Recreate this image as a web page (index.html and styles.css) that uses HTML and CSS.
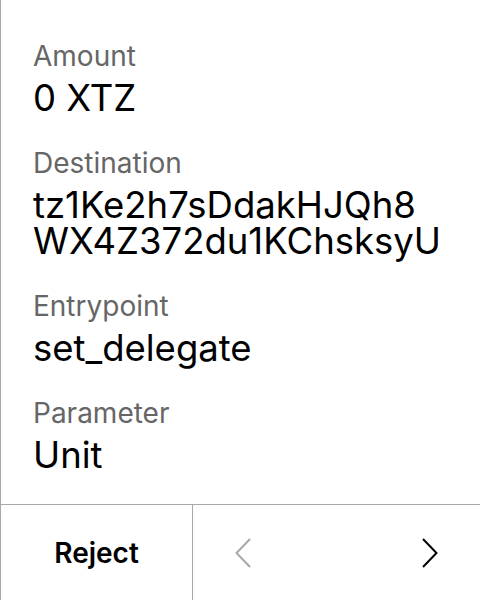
FILE: index.html
```html
<!DOCTYPE html>
<html>
<head>
<meta charset="utf-8">
<link rel="stylesheet" href="styles.css">
</head>
<body>
<div class="screen">
  <div class="content">
    <div class="field">
      <div class="label">Amount</div>
      <div class="value">0 XTZ</div>
    </div>
    <div class="field">
      <div class="label">Destination</div>
      <div class="value"><div>tz1Ke2h7sDdakHJQh8</div><div>WX4Z372du1KChsksyU</div></div>
    </div>
    <div class="field">
      <div class="label">Entrypoint</div>
      <div class="value">set_delegate</div>
    </div>
    <div class="field">
      <div class="label">Parameter</div>
      <div class="value">Unit</div>
    </div>
  </div>
  <div class="footer">
    <div class="reject">Reject</div>
    <div class="nav">
      <svg class="chev prev" width="16" height="30" viewBox="0 0 16 30"><path d="M15 1 L1.5 15 L15 29" fill="none" stroke="currentColor" stroke-width="2"/></svg>
      <svg class="chev next" width="16" height="30" viewBox="0 0 16 30"><path d="M1 1 L14.5 15 L1 29" fill="none" stroke="currentColor" stroke-width="2"/></svg>
    </div>
  </div>
</div>
</body>
</html>
```
FILE: styles.css
```css
html, body {
  margin: 0;
  padding: 0;
  background: #fff;
}
body {
  font-family: Inter, "Noto Sans", sans-serif;
  color: #000;
}
.screen {
  width: 479px;
  height: 600px;
  border-left: 1px solid #a8a8a8;
  display: flex;
  flex-direction: column;
}
.content {
  flex: 1;
  padding: 39px 0 0 32px;
  display: flex;
  flex-direction: column;
  gap: 30px;
}
.field {
  display: flex;
  flex-direction: column;
  gap: 7px;
}
.label {
  font-size: 28px;
  line-height: 34px;
  color: #666;
}
.value {
  font-size: 36.5px;
  line-height: 36px;
  color: #000;
}
.footer {
  height: 95px;
  border-top: 1px solid #a8a8a8;
  display: flex;
}
.reject {
  width: 191px;
  border-right: 1px solid #a8a8a8;
  display: flex;
  align-items: center;
  justify-content: center;
  font-size: 28px;
  font-weight: 600;
}
.nav {
  flex: 1;
  display: flex;
  align-items: center;
  justify-content: space-between;
  padding: 0 42px;
}
.chev.prev { color: #a8a8a8; }
.chev.next { color: #000; }
```
